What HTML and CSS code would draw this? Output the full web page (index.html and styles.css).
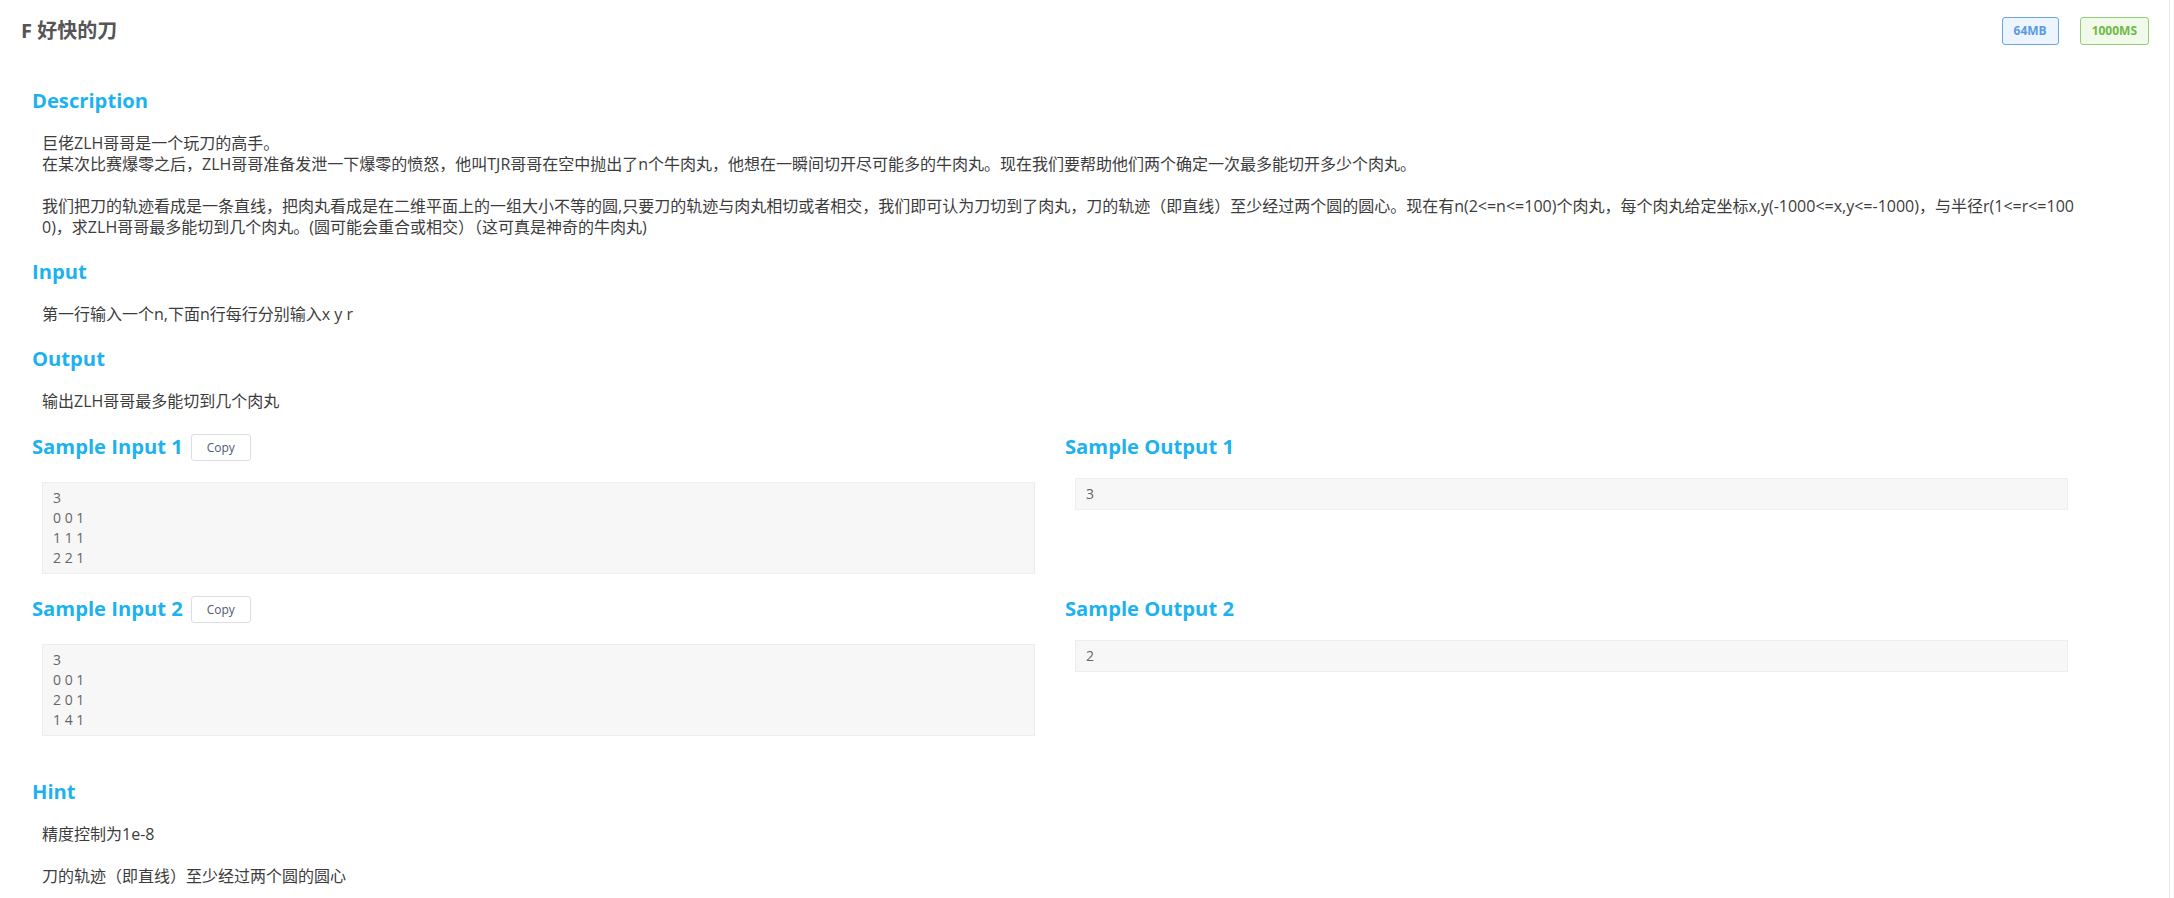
FILE: index.html
```html
<!DOCTYPE html>
<html lang="zh-CN">
<head>
<meta charset="utf-8">
<title>F 好快的刀</title>
<link rel="stylesheet" href="styles.css">
</head>
<body>
<div class="page">
  <header class="top">
    <h1 class="title">F 好快的刀</h1>
    <div class="limits">
      <span class="badge badge-mem">64MB</span>
      <span class="badge badge-time">1000MS</span>
    </div>
  </header>
  <main class="main">
    <section class="sec">
      <h2 class="sec-title">Description</h2>
      <div class="sec-body desc">
        <p>巨佬ZLH哥哥是一个玩刀的高手。<br>在某次比赛爆零之后，ZLH哥哥准备发泄一下爆零的愤怒，他叫TJR哥哥在空中抛出了n个牛肉丸，他想在一瞬间切开尽可能多的牛肉丸。现在我们要帮助他们两个确定一次最多能切开多少个肉丸。</p>
        <p>我们把刀的轨迹看成是一条直线，把肉丸看成是在二维平面上的一组大小不等的圆,只要刀的轨迹与肉丸相切或者相交，我们即可认为刀切到了肉丸，刀的轨迹（即直线）至少经过两个圆的圆心。现在有n(2&lt;=n&lt;=100)个肉丸，每个肉丸给定坐标x,y(-1000&lt;=x,y&lt;=-1000)，与半径r(1&lt;=r&lt;=1000)，求ZLH哥哥最多能切到几个肉丸。(圆可能会重合或相交）（这可真是神奇的牛肉丸)</p>
      </div>
    </section>
    <section class="sec">
      <h2 class="sec-title">Input</h2>
      <div class="sec-body"><p>第一行输入一个n,下面n行每行分别输入x y r</p></div>
    </section>
    <section class="sec">
      <h2 class="sec-title">Output</h2>
      <div class="sec-body"><p>输出ZLH哥哥最多能切到几个肉丸</p></div>
    </section>
    <div class="samples">
      <div class="sample">
        <div class="sample-head with-copy">
          <h2 class="sec-title">Sample Input 1</h2>
          <button class="copy" type="button">Copy</button>
        </div>
        <pre class="sample-box">3
0 0 1
1 1 1
2 2 1</pre>
      </div>
      <div class="sample">
        <div class="sample-head">
          <h2 class="sec-title">Sample Output 1</h2>
        </div>
        <pre class="sample-box">3</pre>
      </div>
      <div class="sample">
        <div class="sample-head with-copy">
          <h2 class="sec-title">Sample Input 2</h2>
          <button class="copy" type="button">Copy</button>
        </div>
        <pre class="sample-box">3
0 0 1
2 0 1
1 4 1</pre>
      </div>
      <div class="sample">
        <div class="sample-head">
          <h2 class="sec-title">Sample Output 2</h2>
        </div>
        <pre class="sample-box">2</pre>
      </div>
    </div>
    <section class="sec">
      <h2 class="sec-title">Hint</h2>
      <div class="sec-body hint">
        <p>精度控制为1e-8</p>
        <p>刀的轨迹（即直线）至少经过两个圆的圆心</p>
      </div>
    </section>
  </main>
</div>
</body>
</html>
```

FILE: styles.css
```css
html, body {
  margin: 0;
  padding: 0;
  background: #ffffff;
}

body {
  font-family: "Open Sans", "Noto Sans CJK SC", sans-serif;
  color: #3c3c3c;
}

.page {
  width: 2170px;
  min-height: 898px;
  box-sizing: border-box;
  border-right: 1px solid #e6e8eb;
}

.top {
  display: flex;
  justify-content: space-between;
  align-items: center;
  padding: 17px 20px 0 21px;
  height: 28px;
}

.title {
  margin: 0;
  font-size: 20px;
  line-height: 28px;
  font-weight: 700;
  color: #555555;
}

.limits {
  display: flex;
  gap: 21px;
}

.badge {
  display: inline-block;
  box-sizing: border-box;
  height: 28px;
  line-height: 26px;
  padding: 0 11px;
  border: 1px solid;
  border-radius: 3px;
  font-size: 12px;
  font-weight: 700;
}

.badge-mem {
  color: #5b9ae3;
  border-color: #6aa5ea;
  background: #ecf4fd;
}

.badge-time {
  color: #6cbb44;
  border-color: #93cf76;
  background: #f1f9ea;
}

.main {
  padding: 41px 72px 0 32px;
}

.sec-title {
  margin: 0;
  font-size: 20.2px;
  line-height: 28px;
  font-weight: 700;
  color: #1cb2ef;
}

.sec-body {
  margin: 19px 0 19px 10px;
  font-size: 16px;
  line-height: 21px;
  word-break: break-all;
}

.sec-body p {
  margin: 0 0 21px;
}

.sec-body p:last-child {
  margin-bottom: 0;
}

.samples {
  display: grid;
  grid-template-columns: 1033px 1033px;
  row-gap: 20px;
  margin-top: 20px;
  margin-bottom: 41px;
}

.sample-head {
  display: flex;
  align-items: center;
  gap: 8px;
  height: 28px;
  margin-bottom: 18px;
}

.sample-head.with-copy {
  margin-bottom: 22px;
}

.copy {
  box-sizing: border-box;
  width: 60px;
  height: 27px;
  margin-top: 3px;
  padding: 0;
  border: 1px solid #dcdee2;
  border-radius: 3px;
  background: #ffffff;
  font-family: "Open Sans", sans-serif;
  font-size: 12px;
  color: #515a6e;
}

.sample-box {
  margin: 0 30px 0 10px;
  padding: 5px 10px;
  border: 1px solid #eeeeee;
  background: #f7f7f7;
  font-family: "Open Sans", "Noto Sans CJK SC", sans-serif;
  font-size: 14px;
  line-height: 20px;
  color: #666666;
  white-space: pre;
}
```
